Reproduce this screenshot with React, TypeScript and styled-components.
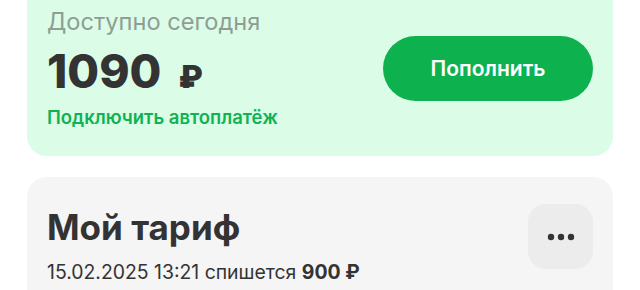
import React from "react"
import styled, { createGlobalStyle } from "styled-components"

const GlobalStyle = createGlobalStyle`
  html, body {
    margin: 0;
    padding: 0;
    background: #ffffff;
  }
  body {
    font-family: Inter, "Noto Sans", "Liberation Sans", sans-serif;
    color: #333333;
    -webkit-font-smoothing: antialiased;
  }
`

const Page = styled.div`
  width: 640px;
  height: 290px;
  overflow: hidden;
  padding: 0 27px;
  box-sizing: border-box;
  display: flex;
  flex-direction: column;
  gap: 21px;
`

const BalanceCard = styled.section`
  margin-top: -20px;
  padding: 28px 20px 27px 20px;
  border-radius: 20px;
  background: #dbfce7;
  display: flex;
  align-items: center;
  justify-content: space-between;
`

const Column = styled.div`
  display: flex;
  flex-direction: column;
`

const Caption = styled.div`
  font-size: 23.6px;
  line-height: 28px;
  color: #8e9e94;
  font-weight: 400;
`

const Amount = styled.div`
  margin-top: 10px;
  font-size: 46px;
  line-height: 50px;
  font-weight: 800;
  color: #333333;
  display: flex;
  align-items: baseline;
  gap: 17px;
`

const Currency = styled.span`
  font-size: 31px;
  font-weight: 900;
`

const LinkText = styled.a`
  margin-top: 3px;
  font-size: 18.5px;
  line-height: 24px;
  font-weight: 600;
  color: #10b254;
  text-decoration: none;
`

const TopUpButton = styled.button`
  width: 210px;
  height: 65px;
  border: none;
  border-radius: 33px;
  background: #0db14e;
  color: #ffffff;
  font-family: inherit;
  font-size: 21px;
  font-weight: 600;
  cursor: pointer;
`

const TariffCard = styled.section`
  padding: 27px 20px 20px 20px;
  border-radius: 20px 20px 0 0;
  background: #f5f5f5;
  display: flex;
  justify-content: space-between;
  align-items: flex-start;
  flex: 1;
`

const Title = styled.h2`
  margin: 3px 0 0 0;
  font-size: 35px;
  line-height: 40px;
  font-weight: 700;
  color: #333333;
`

const Charge = styled.div`
  margin-top: 12px;
  font-size: 19.4px;
  line-height: 26px;
  color: #333333;

  b {
    font-weight: 700;
  }
`

const MoreButton = styled.button`
  width: 65px;
  height: 65px;
  border: none;
  border-radius: 18px;
  background: #ececec;
  display: flex;
  align-items: center;
  justify-content: center;
  cursor: pointer;
  padding: 0;
`

const Dots = () => (
  <svg width="28" height="8" viewBox="0 0 28 8">
    <circle cx="4" cy="4" r="3.2" fill="#333" />
    <circle cx="14" cy="4" r="3.2" fill="#333" />
    <circle cx="24" cy="4" r="3.2" fill="#333" />
  </svg>
)

export default function App() {
  return (
    <>
      <GlobalStyle />
      <Page>
        <BalanceCard>
          <Column>
            <Caption>Доступно сегодня</Caption>
            <Amount>
              1090<Currency>₽</Currency>
            </Amount>
            <LinkText href="#">Подключить автоплатёж</LinkText>
          </Column>
          <TopUpButton>Пополнить</TopUpButton>
        </BalanceCard>
        <TariffCard>
          <Column>
            <Title>Мой тариф</Title>
            <Charge>
              15.02.2025 13:21 спишется <b>900 ₽</b>
            </Charge>
          </Column>
          <MoreButton aria-label="Ещё">
            <Dots />
          </MoreButton>
        </TariffCard>
      </Page>
    </>
  )
}
